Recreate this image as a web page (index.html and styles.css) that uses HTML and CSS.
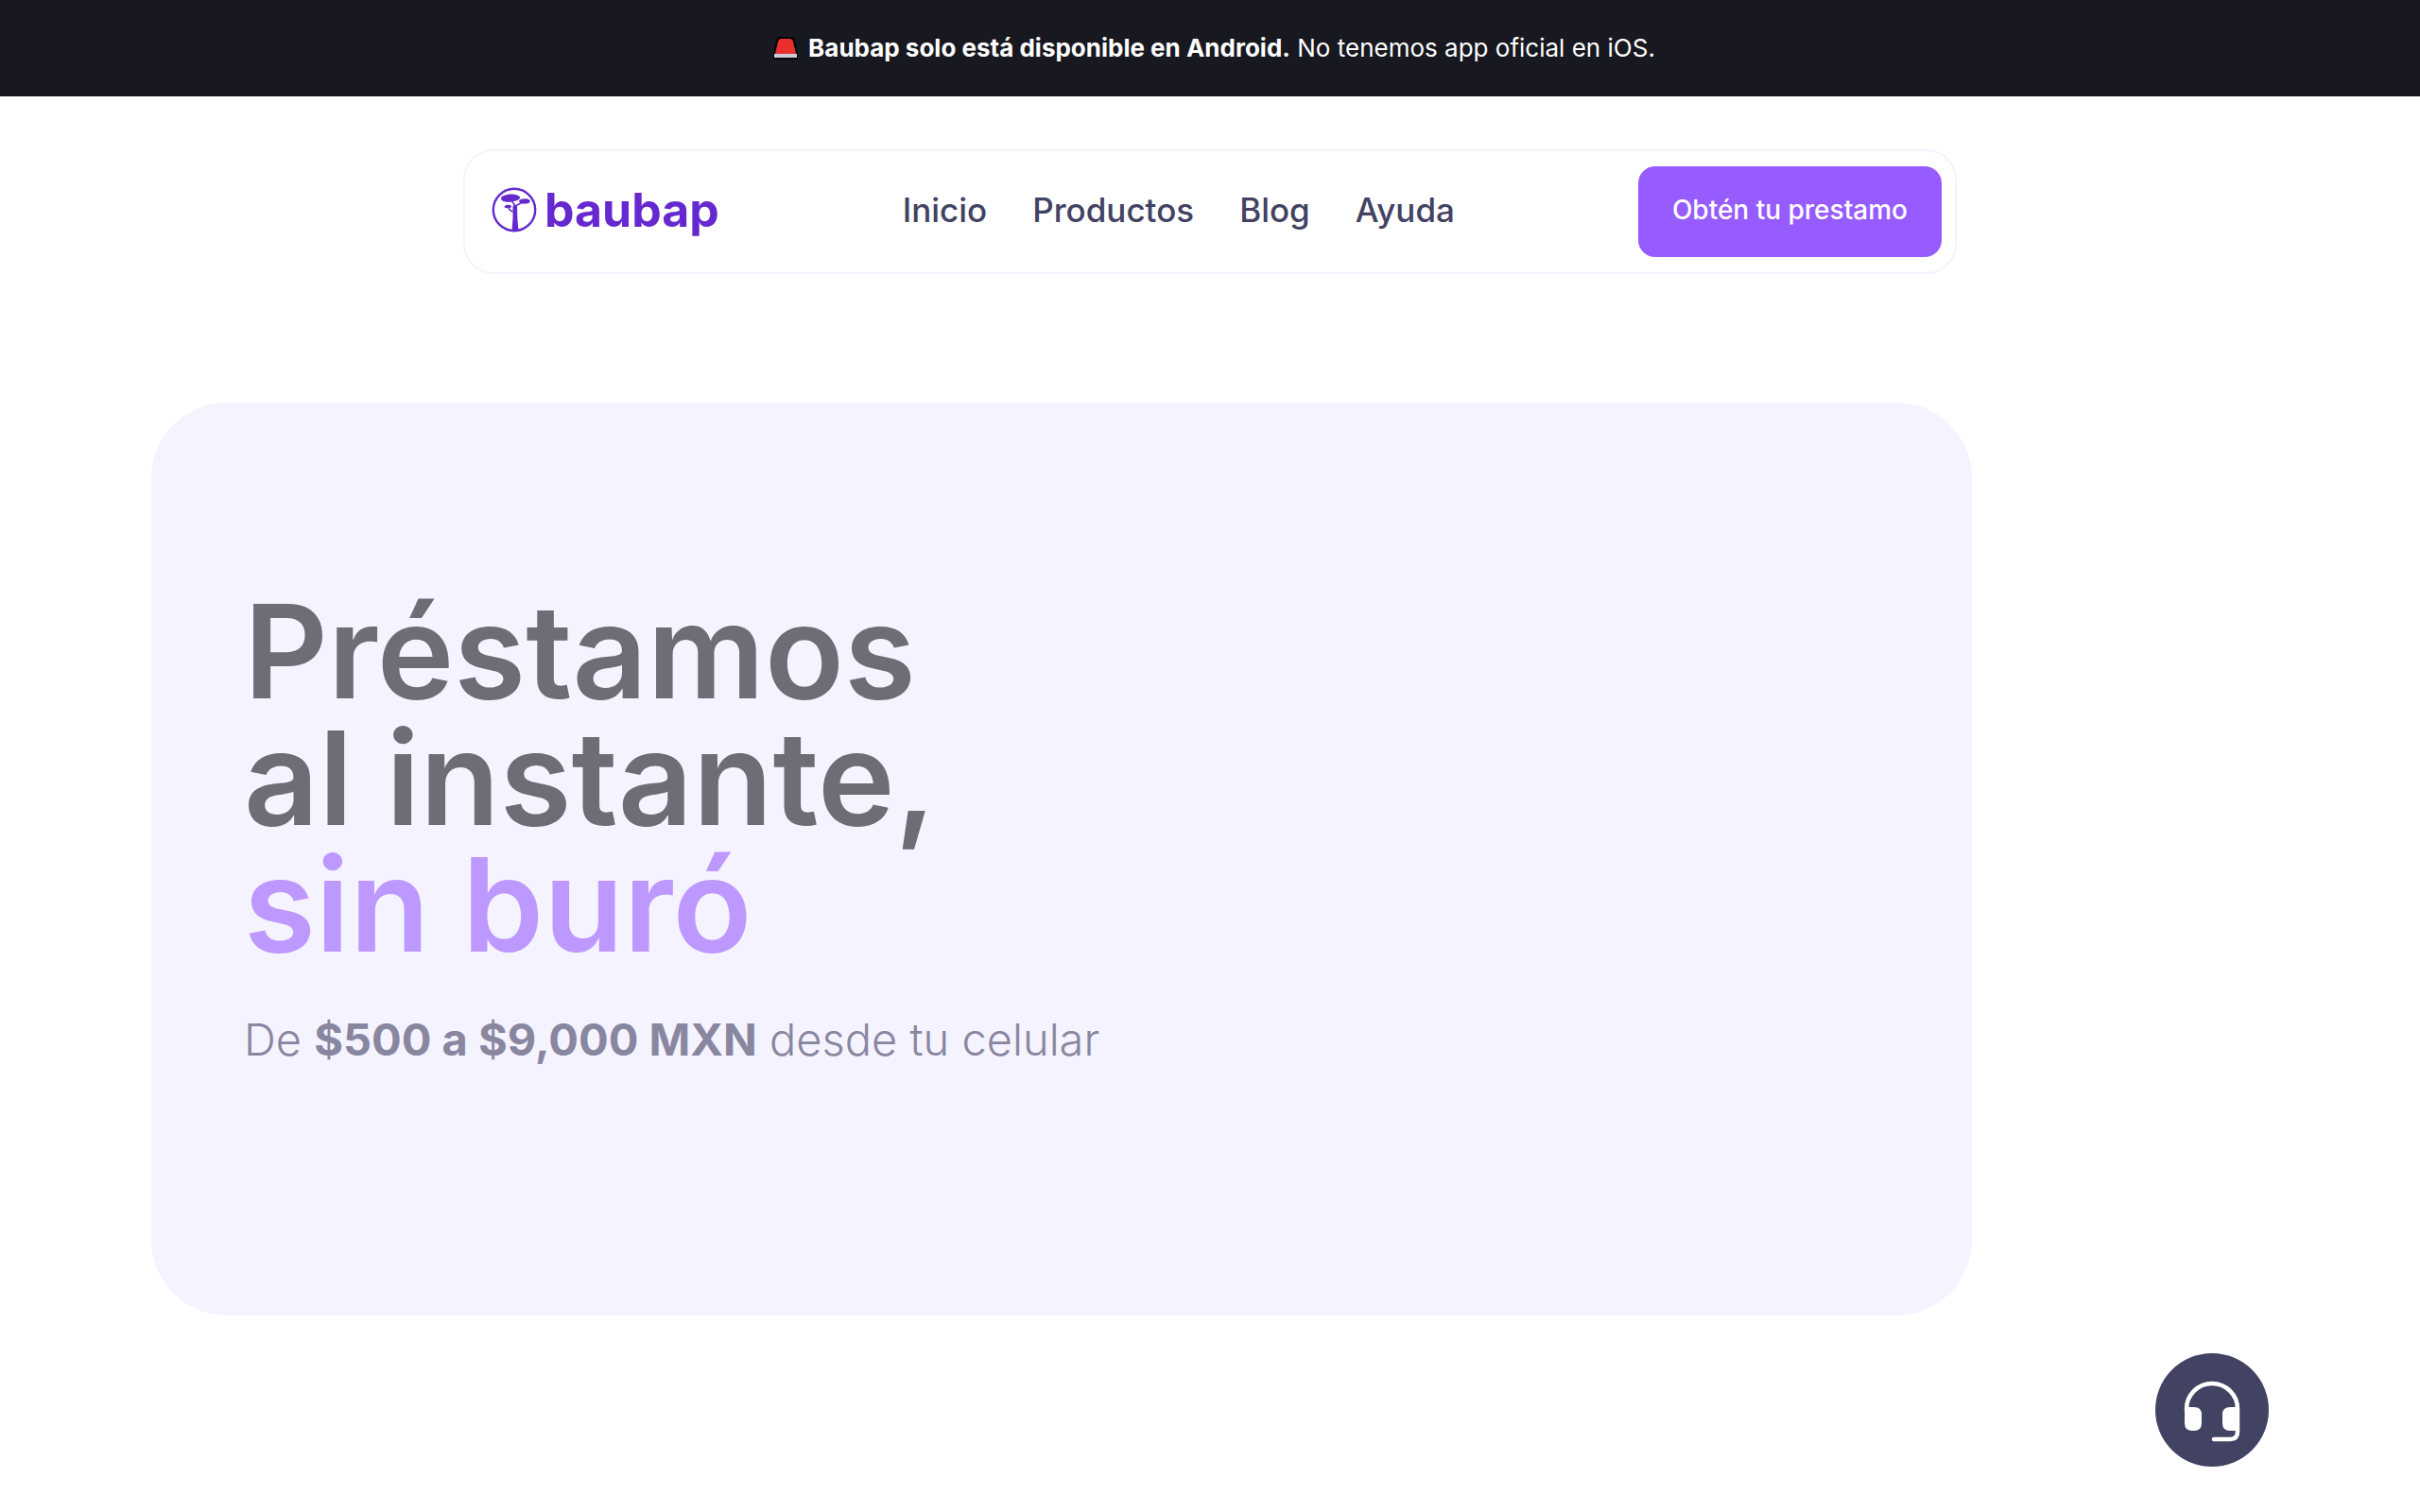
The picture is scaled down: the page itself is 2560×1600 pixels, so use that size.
FILE: index.html
```html
<!DOCTYPE html>
<html lang="es">
<head>
  <meta charset="utf-8">
  <meta name="viewport" content="width=device-width, initial-scale=1">
  <title>Baubap</title>
  <link rel="stylesheet" href="styles.css">
</head>
<body>
  <div class="top-banner">
    <svg class="siren" viewBox="0 0 28 26" aria-hidden="true">
      <path d="M8 1h12q3 0 4 3l3 14v5q0 2-2 2H3q-2 0-2-2v-5L4 4q1-3 4-3z" fill="#050505"/>
      <path d="M9 3h9q3 0 4 3l3 13H3L6 6q1-3 3-3z" fill="#e9302f"/>
      <path d="M2 19h24v4H2z" fill="#c9cbdc"/>
    </svg>
    <p><strong>Baubap solo está disponible en Android.</strong> No tenemos app oficial en iOS.</p>
  </div>

  <header class="navbar">
    <a href="#" class="logo">
      <svg class="logo-icon" viewBox="0 0 48 48" aria-hidden="true">
        <circle cx="24" cy="24" r="22.2" fill="none" stroke="#6629d0" stroke-width="2.4"/>
        <path d="M10 12c0-3 6-4.500 11-4.500 4 0 9 1.500 9 3.500 0 3-5 3.500-8 4.500-4 1-12 0-12-3.500z" fill="#6629d0"/>
        <path d="M29 14.500c1-2.500 10-3 11.500-.5 1 2.500-2 4-5.500 3.500-3 .5-6-.5-6-3z" fill="#6629d0"/>
        <path d="M13.500 20.500c1-2 6-2.500 7.500-.5.500 1.500-1 2-3 2-2 .5-4.500.200-4.500-1.500z" fill="#6629d0"/>
        <path d="M22 15.500l3 4.500 6-3M18 22l1.500 2.500 3 1.500" fill="none" stroke="#6629d0" stroke-width="1.500"/>
        <path d="M22.500 20q2-1.500 4.500 0 0 13 1.500 26.500h-7q1.500-13 1-26.500z" fill="#6629d0"/>
      </svg>
      <span class="logo-text">baubap</span>
    </a>

    <nav class="nav-links">
      <a href="#">Inicio</a>
      <a href="#">Productos</a>
      <a href="#">Blog</a>
      <a href="#">Ayuda</a>
    </nav>

    <button class="btn-primary">Obtén tu prestamo</button>
  </header>

  <main class="hero">
    <h1>Préstamos<br>al instante,<br><span class="highlight">sin buró</span></h1>
    <p class="subtitle">De <strong>$500 a $9,000 MXN</strong> desde tu celular</p>
  </main>

  <button class="support" aria-label="Ayuda">
    <svg viewBox="0 0 60 66" aria-hidden="true">
      <path d="M3 31v-1a27 27 0 0 1 54 0v24q0 8-8 8H32" fill="none" stroke="#fff" stroke-width="4.500" stroke-linecap="round"/>
      <path d="M1 28h10q8 0 8 8v9q0 8-8 8H9q-8 0-8-8zM59 28H49q-8 0-8 8v9q0 8 8 8h10z" fill="#fff"/>
    </svg>
  </button>
</body>
</html>
```
FILE: styles.css
```css
* {
  box-sizing: border-box;
}
body {
  margin: 0;
  background: #fff;
  font-family: Inter, sans-serif;
  color: #424263;
}
a {
  color: inherit;
  text-decoration: none;
}
button {
  border: none;
  cursor: pointer;
  font-family: inherit;
}

.top-banner {
  display: flex;
  align-items: center;
  justify-content: center;
  gap: 10px;
  padding: 32px 24px 32px 32px;
  background: #181820;
  color: #fff;
  font-size: 26px;
  line-height: 38px;
}
.top-banner p {
  margin: 0;
}
.siren {
  width: 28px;
  height: 26px;
}

.navbar {
  display: flex;
  align-items: center;
  justify-content: space-between;
  max-width: 1580px;
  margin: 56px auto 0;
  padding: 16px 14px 16px 28px;
  border: 2px solid #f4f3ff;
  border-radius: 32px;
}
.logo {
  display: flex;
  align-items: center;
  gap: 8px;
  padding-bottom: 4px;
}
.logo-icon {
  width: 48px;
  height: 48px;
}
.logo-text {
  color: #6629d0;
  font-size: 50px;
  font-weight: 700;
  line-height: 60px;
}
.nav-links {
  display: flex;
  gap: 48px;
  padding-bottom: 4px;
  font-size: 35px;
  font-weight: 500;
}
.btn-primary {
  padding: 28px 36px 32px;
  border-radius: 18px;
  background: #975cff;
  color: #fff;
  font-size: 28px;
  font-weight: 500;
  line-height: 36px;
}

.hero {
  margin: 136px 474px 0 160px;
  padding: 196px 98px 256px;
  border-radius: 80px;
  background: #f4f3ff;
}
.hero h1 {
  margin: 0;
  color: #6e6c75;
  font-size: 138px;
  font-weight: 600;
  line-height: 134px;
}
.hero .highlight {
  color: #bd99ff;
}
.subtitle {
  margin: 40px 0 0;
  color: #89869f;
  font-size: 47px;
  font-weight: 300;
  line-height: 72px;
}
.subtitle strong {
  font-weight: 700;
}

.support {
  position: fixed;
  right: 160px;
  bottom: 48px;
  display: flex;
  align-items: center;
  justify-content: center;
  width: 120px;
  height: 120px;
  padding: 4px 0 0;
  border-radius: 50%;
  background: #424263;
}
.support svg {
  width: 60px;
  height: 66px;
}
```
